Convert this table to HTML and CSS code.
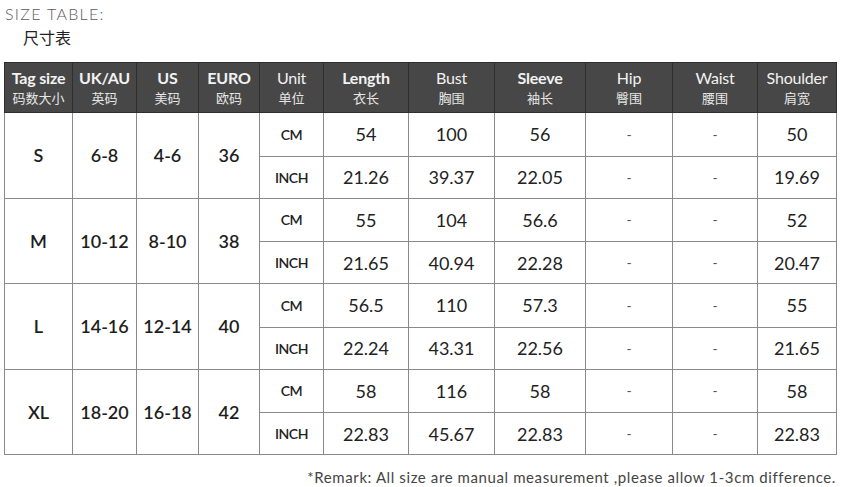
FILE: index.html
```html
<!DOCTYPE html>
<html>
<head>
<meta charset="utf-8">
<link rel="stylesheet" href="styles.css">
</head>
<body>
<div class="page">
  <div class="title">SIZE TABLE:</div>
  <div class="subtitle">尺寸表</div>
  <table class="size-table">
    <colgroup>
      <col style="width:68px"><col style="width:64px"><col style="width:62px"><col style="width:61px"><col style="width:64px"><col style="width:85px"><col style="width:86px"><col style="width:91px"><col style="width:87px"><col style="width:85px"><col style="width:79px">
    </colgroup>
    <thead>
      <tr>
        <th><span class="en b">Tag size</span><span class="zh">码数大小</span></th>
        <th><span class="en b">UK/AU</span><span class="zh">英码</span></th>
        <th><span class="en b">US</span><span class="zh">美码</span></th>
        <th><span class="en b">EURO</span><span class="zh">欧码</span></th>
        <th><span class="en m">Unit</span><span class="zh">单位</span></th>
        <th><span class="en b">Length</span><span class="zh">衣长</span></th>
        <th><span class="en">Bust</span><span class="zh">胸围</span></th>
        <th><span class="en b">Sleeve</span><span class="zh">袖长</span></th>
        <th><span class="en">Hip</span><span class="zh">臀围</span></th>
        <th><span class="en">Waist</span><span class="zh">腰围</span></th>
        <th><span class="en">Shoulder</span><span class="zh">肩宽</span></th>
      </tr>
    </thead>
    <tbody>
      <tr class="cm">
        <td rowspan="2" class="size">S</td><td rowspan="2" class="size">6-8</td><td rowspan="2" class="size">4-6</td><td rowspan="2" class="size">36</td>
        <td class="unit">CM</td><td>54</td><td>100</td><td>56</td><td class="dash">-</td><td class="dash">-</td><td>50</td>
      </tr>
      <tr class="inch">
        <td class="unit">INCH</td><td>21.26</td><td>39.37</td><td>22.05</td><td class="dash">-</td><td class="dash">-</td><td>19.69</td>
      </tr>
      <tr class="cm">
        <td rowspan="2" class="size">M</td><td rowspan="2" class="size">10-12</td><td rowspan="2" class="size">8-10</td><td rowspan="2" class="size">38</td>
        <td class="unit">CM</td><td>55</td><td>104</td><td>56.6</td><td class="dash">-</td><td class="dash">-</td><td>52</td>
      </tr>
      <tr class="inch">
        <td class="unit">INCH</td><td>21.65</td><td>40.94</td><td>22.28</td><td class="dash">-</td><td class="dash">-</td><td>20.47</td>
      </tr>
      <tr class="cm">
        <td rowspan="2" class="size">L</td><td rowspan="2" class="size">14-16</td><td rowspan="2" class="size">12-14</td><td rowspan="2" class="size">40</td>
        <td class="unit">CM</td><td>56.5</td><td>110</td><td>57.3</td><td class="dash">-</td><td class="dash">-</td><td>55</td>
      </tr>
      <tr class="inch">
        <td class="unit">INCH</td><td>22.24</td><td>43.31</td><td>22.56</td><td class="dash">-</td><td class="dash">-</td><td>21.65</td>
      </tr>
      <tr class="cm">
        <td rowspan="2" class="size">XL</td><td rowspan="2" class="size">18-20</td><td rowspan="2" class="size">16-18</td><td rowspan="2" class="size">42</td>
        <td class="unit">CM</td><td>58</td><td>116</td><td>58</td><td class="dash">-</td><td class="dash">-</td><td>58</td>
      </tr>
      <tr class="inch">
        <td class="unit">INCH</td><td>22.83</td><td>45.67</td><td>22.83</td><td class="dash">-</td><td class="dash">-</td><td>22.83</td>
      </tr>
    </tbody>
  </table>
  <div class="remark">*Remark: All size are manual measurement ,please allow 1-3cm difference.</div>
</div>
</body>
</html>
```
FILE: styles.css
```css
html, body {
  margin: 0;
  padding: 0;
  background: #fff;
}
.page {
  width: 843px;
  height: 487px;
  padding: 4px 0 0 4px;
  box-sizing: border-box;
  font-family: "Lato", "Noto Sans CJK SC", sans-serif;
  color: #222;
}
.title {
  font-family: "Lato", sans-serif;
  font-weight: 300;
  font-size: 16px;
  line-height: 20px;
  letter-spacing: 1.3px;
  color: #5a5a5a;
  padding-left: 1px;
}
.subtitle {
  font-family: "Noto Sans CJK SC", sans-serif;
  font-size: 16px;
  line-height: 22px;
  color: #222;
  padding-left: 19px;
  margin-top: 2px;
}
.size-table {
  margin-top: 14px;
  border-collapse: collapse;
  table-layout: fixed;
  width: 832px;
}
.size-table th {
  background: #474747;
  color: #f2f2f2;
  height: 49px;
  padding: 0;
  border: 1px solid #2e2e2e;
  vertical-align: middle;
  text-align: center;
  font-weight: normal;
}
.size-table th .en {
  display: block;
  font-size: 16px;
  line-height: 20px;
  letter-spacing: -0.2px;
}
.size-table th .en.b {
  font-weight: 700;
}
.size-table th .en.m {
  font-weight: 400;
}
.size-table th .zh {
  display: block;
  font-family: "Noto Sans CJK SC", sans-serif;
  font-size: 13px;
  line-height: 20px;
  color: #e6e6e6;
}
.size-table td {
  border: 1px solid #8a8a8a;
  padding: 0;
  text-align: center;
  vertical-align: middle;
  font-size: 18px;
  color: #222;
}
.size-table tr.cm td {
  height: 42.5px;
}
.size-table tr.inch td {
  height: 41px;
}
.size-table td.size {
  font-weight: 600;
  font-size: 18px;
  color: #1e1e1e;
}
.size-table td.unit {
  font-size: 14px;
  font-weight: 600;
  letter-spacing: -0.4px;
}
.size-table td.dash {
  font-size: 14px;
  color: #555;
}
.remark {
  margin-top: 14px;
  width: 832px;
  text-align: right;
  font-size: 15px;
  line-height: 16px;
  color: #444;
  letter-spacing: 0.6px;
}
```
